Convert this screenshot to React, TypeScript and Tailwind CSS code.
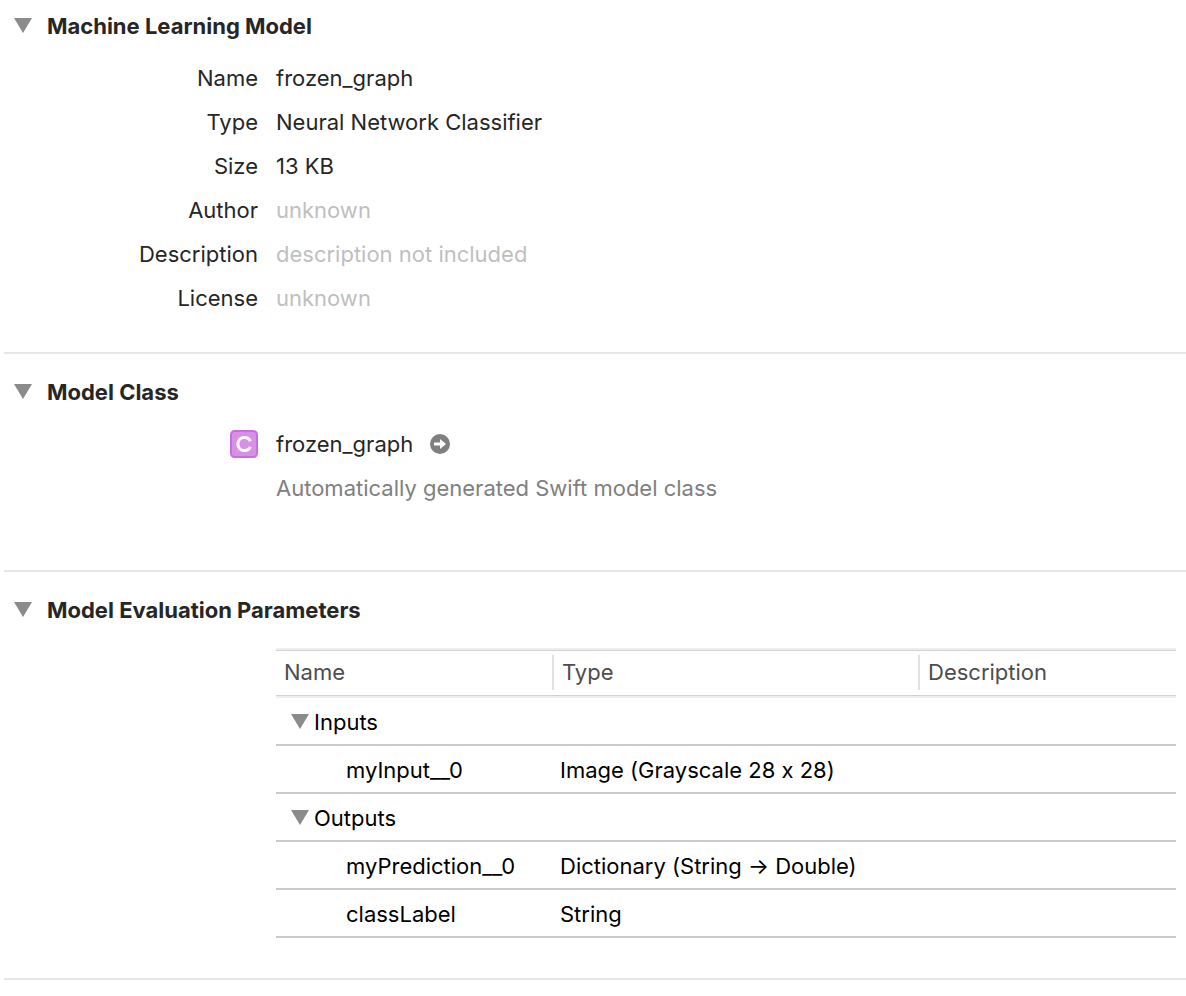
import { useState, type ReactNode } from "react";

const details = [
  { label: "Name", value: "frozen_graph" },
  { label: "Type", value: "Neural Network Classifier" },
  { label: "Size", value: "13 KB" },
  { label: "Author", value: "unknown", missing: true },
  { label: "Description", value: "description not included", missing: true },
  { label: "License", value: "unknown", missing: true },
];

const groups = [
  {
    title: "Inputs",
    rows: [{ name: "myInput__0", type: "Image (Grayscale 28 x 28)", description: "" }],
  },
  {
    title: "Outputs",
    rows: [
      { name: "myPrediction__0", type: "Dictionary (String → Double)", description: "" },
      { name: "classLabel", type: "String", description: "" },
    ],
  },
];

function Triangle({ open }: { open: boolean }) {
  return (
    <svg
      viewBox="0 0 18 16"
      aria-hidden="true"
      className={open ? "h-4 w-[18px] shrink-0" : "h-4 w-[18px] shrink-0 -rotate-90"}
    >
      <path d="M0 0H18L9 15Z" fill="#8b8b8b" />
    </svg>
  );
}

function Section({ title, className, children }: { title: string; className: string; children: ReactNode }) {
  const [open, setOpen] = useState(true);
  return (
    <section className={`ml-1 border-b-2 border-[#e6e6e6] ${className}`}>
      <h2>
        <button
          type="button"
          aria-expanded={open}
          onClick={() => setOpen(!open)}
          className="flex h-11 items-center gap-[15px] pl-[10px] font-bold"
        >
          <Triangle open={open} />
          {title}
        </button>
      </h2>
      {open && children}
    </section>
  );
}

function HeaderCell({ children, divided }: { children: string; divided?: boolean }) {
  return (
    <th scope="col" className="border-y border-[#d2d2d2] p-0 pt-1 pb-[5px] text-left font-normal text-[#4d4d4d]">
      <div
        className={
          divided
            ? "h-[35px] border-l-2 border-[#e2e2e2] pt-[3px] pl-2"
            : "h-[35px] pt-[3px] pl-2"
        }
      >
        {children}
      </div>
    </th>
  );
}

function Group({ group, first }: { group: (typeof groups)[number]; first: boolean }) {
  const [open, setOpen] = useState(true);
  return (
    <tbody>
      <tr>
        <th
          scope="rowgroup"
          colSpan={3}
          className={
            first
              ? "border-t-2 border-b-2 border-t-[#eeeeee] border-b-[#cacaca] p-0 text-left font-normal"
              : "border-b-2 border-[#cacaca] p-0 text-left font-normal"
          }
        >
          <button
            type="button"
            aria-expanded={open}
            onClick={() => setOpen(!open)}
            className="flex h-[46px] items-center gap-[5px] pt-[2px] pl-[15px]"
          >
            <Triangle open={open} />
            {group.title}
          </button>
        </th>
      </tr>
      {open &&
        group.rows.map((row) => (
          <tr key={row.name}>
            <td className="h-12 border-b-2 border-[#cacaca] p-0 pt-[2px] pl-[70px]">{row.name}</td>
            <td className="h-12 border-b-2 border-[#cacaca] p-0 pt-[2px] pl-2">{row.type}</td>
            <td className="h-12 border-b-2 border-[#cacaca] p-0 pt-[2px] pl-2">{row.description}</td>
          </tr>
        ))}
    </tbody>
  );
}

export default function App() {
  return (
    <main className="min-h-screen bg-white font-['Inter',sans-serif] text-[22px] leading-7 text-[#262626] [font-feature-settings:'calt'_0]">
      <Section title="Machine Learning Model" className="pt-1 pb-8">
        <dl className="mt-2">
          {details.map((item) => (
            <div key={item.label} className="flex h-11 items-center gap-[18px]">
              <dt className="w-[254px] shrink-0 text-right">{item.label}</dt>
              <dd className={item.missing ? "text-[#bfbfbf]" : ""}>{item.value}</dd>
            </div>
          ))}
        </dl>
      </Section>

      <Section title="Model Class" className="pt-4 pb-[60px]">
        <div className="mt-2 grid grid-cols-[254px_1fr] gap-x-[18px]">
          <div className="flex h-11 items-center justify-end">
            <svg viewBox="0 0 28 28" className="size-7" role="img" aria-label="Class">
              <rect x="1" y="1" width="26" height="26" rx="3.5" fill="#d88fe6" stroke="#c76fe0" strokeWidth="2" />
              <path
                d="M20.3 11.2C19.5 8.8 17.4 7.5 14.6 7.5C10.6 7.5 7.9 10 7.9 14C7.9 18 10.6 20.5 14.6 20.5C17.4 20.5 19.5 19.2 20.3 16.8"
                fill="none"
                stroke="#ffffff"
                strokeWidth="3"
              />
            </svg>
          </div>
          <div className="flex h-11 items-center gap-[17px]">
            <span>frozen_graph</span>
            <button type="button" aria-label="Open generated class">
              <svg viewBox="0 0 20 20" className="size-5" aria-hidden="true">
                <circle cx="10" cy="10" r="10" fill="#7f7f7f" />
                <path d="M4 8.5H10V5L16 10L10 15V11.5H4Z" fill="#ffffff" />
              </svg>
            </button>
          </div>
          <p className="col-start-2 flex h-11 items-center text-[#808080]">
            Automatically generated Swift model class
          </p>
        </div>
      </Section>

      <Section title="Model Evaluation Parameters" className="pt-4 pb-10">
        <div className="mt-4 mr-[10px] ml-[272px]">
          <table className="w-full table-fixed border-separate border-spacing-0 border-t-2 border-[#eeeeee] text-black">
            <colgroup>
              <col className="w-[276px]" />
              <col className="w-[366px]" />
              <col />
            </colgroup>
            <thead>
              <tr>
                <HeaderCell>Name</HeaderCell>
                <HeaderCell divided>Type</HeaderCell>
                <HeaderCell divided>Description</HeaderCell>
              </tr>
            </thead>
            {groups.map((group, index) => (
              <Group key={group.title} group={group} first={index === 0} />
            ))}
          </table>
        </div>
      </Section>
    </main>
  );
}
